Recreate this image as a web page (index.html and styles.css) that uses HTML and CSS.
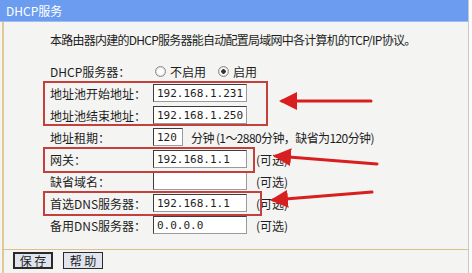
FILE: index.html
```html
<!DOCTYPE html>
<html lang="zh-CN">

<head>
    <meta charset="UTF-8">
    <title>DHCP服务</title>
    <link rel="stylesheet" href="styles.css">
</head>

<body>
    <div class="page">
        <div class="title-bar">DHCP服务</div>

        <div class="content">
            <p class="intro">本路由器内建的DHCP服务器能自动配置局域网中各计算机的TCP/IP协议。</p>

            <div class="form">
                <label>DHCP服务器：</label>
                <div class="field">
                    <span class="radio"></span><span class="radio-text">不启用</span>
                    <span class="radio checked"></span><span class="radio-text">启用</span>
                </div>

                <label>地址池开始地址：</label>
                <div class="field"><input class="ip" type="text" value="192.168.1.231"></div>

                <label>地址池结束地址：</label>
                <div class="field"><input class="ip" type="text" value="192.168.1.250"></div>

                <label>地址租期：</label>
                <div class="field"><input class="short" type="text" value="120"><span class="note lease">分钟 (1～2880分钟，缺省为120分钟)</span></div>

                <label>网关：</label>
                <div class="field"><input class="ip" type="text" value="192.168.1.1"><span class="note">(可选)</span></div>

                <label>缺省域名：</label>
                <div class="field"><input class="ip" type="text" value=""><span class="note">(可选)</span></div>

                <label>首选DNS服务器：</label>
                <div class="field"><input class="ip" type="text" value="192.168.1.1"><span class="note">(可选)</span></div>

                <label>备用DNS服务器：</label>
                <div class="field"><input class="ip" type="text" value="0.0.0.0"><span class="note">(可选)</span></div>
            </div>
        </div>

        <div class="footer">
            <button class="btn default">保 存</button>
            <button class="btn">帮 助</button>
        </div>
    </div>

    <!-- red annotation marks drawn over the form -->
    <svg class="marks" width="472" height="273" viewBox="0 0 472 273">
        <defs>
            <marker id="head" markerWidth="6" markerHeight="6" refX="1" refY="3" orient="auto" markerUnits="strokeWidth">
                <path d="M6,0 L0,3 L6,6 Z" fill="#d81e1e"></path>
            </marker>
        </defs>
        <g fill="none" stroke="#c4403c" stroke-width="2">
            <rect x="44" y="82" width="223" height="43"></rect>
            <rect x="44" y="148" width="210" height="24"></rect>
            <rect x="44" y="192" width="217" height="23"></rect>
        </g>
        <g stroke="#d81e1e" stroke-width="3" stroke-linecap="round" marker-start="url(#head)">
            <line x1="282" y1="101" x2="371" y2="101"></line>
            <line x1="276" y1="156" x2="377" y2="164"></line>
            <line x1="273" y1="200" x2="372" y2="192"></line>
        </g>
    </svg>
</body>

</html>
```

FILE: styles.css
```css
body {
    margin: 0;
    background-color: #fbfbfb;
    font-family: "Noto Sans CJK SC", "DejaVu Sans", sans-serif;
    font-size: 12px;
    color: #1e1e1e;
}
.page {
    width: 469px;
    height: 273px;
    background-color: #f4f4f2;
    border-right: 1px solid #c8c8c8;
    box-sizing: border-box;
}
.title-bar {
    height: 22px;
    line-height: 21px;
    padding-left: 6px;
    background-color: #6b9cf0;
    border-bottom: 1px solid #9cbcf4;
    box-sizing: border-box;
    color: #ffffff;
}
.content {
    margin-left: 2px;
    border-left: 2px solid #e2c894;
    padding-left: 44px;
    padding-top: 10px;
    height: 227px;
    box-sizing: border-box;
}
.intro {
    margin: 0 0 12px 2px;
    line-height: 16px;
    letter-spacing: -0.75px;
}
.form {
    display: grid;
    grid-template-columns: 105px auto;
    grid-auto-rows: 22px;
    align-items: center;
}
.form label {
    padding-left: 2px;
}
.field {
    display: flex;
    align-items: center;
}
input {
    height: 18px;
    padding: 0 3px;
    border: 1px solid #3c3c3c;
    border-right-color: #9a9a9a;
    border-bottom-color: #9a9a9a;
    background-color: #ffffff;
    box-sizing: border-box;
    font-family: "DejaVu Sans Mono", monospace;
    font-size: 11px;
    color: #1e1e1e;
}
input.ip {
    width: 94px;
}
input.short {
    width: 30px;
}
.note {
    margin-left: 9px;
}
.note.lease {
    margin-left: 8px;
    letter-spacing: -0.6px;
}
.radio {
    width: 9px;
    height: 9px;
    margin-left: 2px;
    border: 1px solid #8a8a8a;
    border-radius: 50%;
    background-color: #ffffff;
    box-shadow: inset 0 0 0 1px #dcdcdc;
}
.radio.checked {
    margin-left: 12px;
    background: radial-gradient(circle, #333333 0 2px, #ffffff 2.5px);
}
.radio-text {
    margin-left: 4px;
}
.footer {
    margin-left: 2px;
    border-left: 2px solid #e2c894;
    border-top: 1px solid #dcc08c;
    padding: 2px 0 0 9px;
    display: flex;
    gap: 10px;
    height: 24px;
    box-sizing: border-box;
}
.btn {
    width: 40px;
    height: 17px;
    padding: 0;
    border: 1px solid #2a2a2a;
    background-color: #dfe4ee;
    font-family: "Noto Sans CJK SC", sans-serif;
    font-size: 12px;
    line-height: 14px;
    color: #1e1e1e;
}
.btn.default {
    border-width: 2px;
}
.marks {
    position: absolute;
    left: 0;
    top: 0;
    pointer-events: none;
}
```
